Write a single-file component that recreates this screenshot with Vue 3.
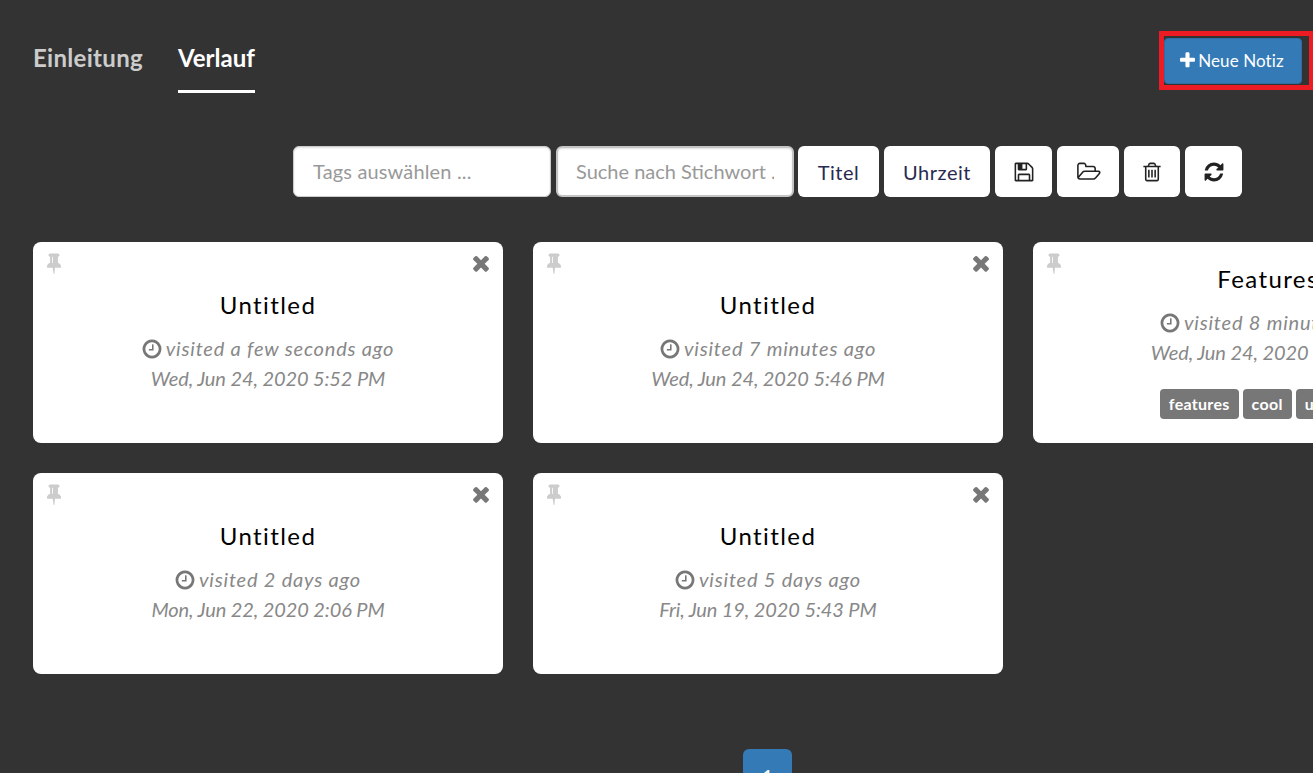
<script setup>
const P = {
  plus: 'M1600 736v192q0 40-28 68t-68 28h-416v416q0 40-28 68t-68 28h-192q-40 0-68-28t-28-68v-416h-416q-40 0-68-28t-28-68v-192q0-40 28-68t68-28h416v-416q0-40 28-68t68-28h192q40 0 68 28t28 68v416h416q40 0 68 28t28 68z',
  times: 'M1490 1322q0 40-28 68l-136 136q-28 28-68 28t-68-28l-294-294-294 294q-28 28-68 28t-68-28l-136-136q-28-28-28-68t28-68l294-294-294-294q-28-28-28-68t28-68l136-136q28-28 68-28t68 28l294 294 294-294q28-28 68-28t68 28l136 136q28 28 28 68t-28 68l-294 294 294 294q28 28 28 68z',
  clock: 'M1024 544v448q0 14-9 23t-23 9h-320q-14 0-23-9t-9-23v-64q0-14 9-23t23-9h224v-352q0-14 9-23t23-9h64q14 0 23 9t9 23zm416 352q0-148-73-273t-198-198-273-73-273 73-198 198-73 273 73 273 198 198 273 73 273-73 198-198 73-273zm224 0q0 209-103 385.500t-279.500 279.500-385.500 103-385.500-103-279.500-279.500-103-385.500 103-385.500 279.500-279.500 385.500-103 385.500 103 279.500 279.500 103 385.500z',
  pin: 'M800 864v-448q0-14-9-23t-23-9-23 9-9 23v448q0 14 9 23t23 9 23-9 9-23zm672 352q0 26-19 45t-45 19h-429l-51 483q-2 12-10.500 20.500t-20.500 8.500h-1q-27 0-32-27l-76-485h-404q-26 0-45-19t-19-45q0-123 78.500-221.500t177.500-98.500v-512q-52 0-90-38t-38-90 38-90 90-38h640q52 0 90 38t38 90-38 90-90 38v512q99 0 177.500 98.500t78.500 221.500z',
  save: 'M512 1536h768v-384h-768v384zm896 0h128v-896q0-14-10-38.500t-20-34.500l-281-281q-10-10-34-20t-39-10v416q0 40-28 68t-68 28h-576q-40 0-68-28t-28-68v-416h-128v1280h128v-416q0-40 28-68t68-28h832q40 0 68 28t28 68v416zm-384-928v-320q0-13-9.500-22.500t-22.500-9.500h-192q-13 0-22.500 9.500t-9.500 22.500v320q0 13 9.500 22.500t22.500 9.500h192q13 0 22.500-9.500t9.500-22.500zm640 32v928q0 40-28 68t-68 28h-1344q-40 0-68-28t-28-68v-1344q0-40 28-68t68-28h928q40 0 88 20t76 48l280 280q28 28 48 76t20 88z',
  open: 'M1845 931q0-35-53-35h-1088q-40 0-85.500 21.500t-71.500 52.500l-294 363q-18 24-18 40 0 35 53 35h1088q40 0 86-22t71-53l294-363q18-22 18-39zm-1141-163h768v-160q0-40-28-68t-68-28h-576q-40 0-68-28t-28-68v-64q0-40-28-68t-68-28h-320q-40 0-68 28t-28 68v853l256-315q44-53 116-87.500t140-34.500zm1269 163q0 62-46 120l-295 363q-43 53-116 87.500t-140 34.500h-1088q-92 0-158-66t-66-158v-960q0-92 66-158t158-66h320q92 0 158 66t66 158v32h544q92 0 158 66t66 158v160h192q54 0 99 24.500t67 70.500q15 32 15 68z',
  trash: 'M704 736v576q0 14-9 23t-23 9h-64q-14 0-23-9t-9-23v-576q0-14 9-23t23-9h64q14 0 23 9t9 23zm256 0v576q0 14-9 23t-23 9h-64q-14 0-23-9t-9-23v-576q0-14 9-23t23-9h64q14 0 23 9t9 23zm256 0v576q0 14-9 23t-23 9h-64q-14 0-23-9t-9-23v-576q0-14 9-23t23-9h64q14 0 23 9t9 23zm128 724v-948h-896v948q0 22 7 40.500t14.500 27 10.500 8.500h832q3 0 10.500-8.500t14.500-27 7-40.500zm-672-1076h448l-48-117q-7-9-17-11h-317q-10 2-17 11zm928 32v64q0 14-9 23t-23 9h-96v948q0 83-47 143.500t-113 60.500h-832q-66 0-113-58.500t-47-141.500v-952h-96q-14 0-23-9t-9-23v-64q0-14 9-23t23-9h309l70-167q15-37 54-63t79-26h320q40 0 79 26t54 63l70 167h309q14 0 23 9t9 23z',
  refresh: 'M1639 1056q0 5-1 7-64 268-268 434.500t-478 166.500q-146 0-282.500-55t-243.500-157l-129 129q-19 19-45 19t-45-19-19-45v-448q0-26 19-45t45-19h448q26 0 45 19t19 45-19 45l-137 137q71 66 161 102t187 36q134 0 250-65t186-179q11-17 53-117 8-23 30-23h192q13 0 22.500 9.500t9.500 22.500zm25-800v448q0 26-19 45t-45 19h-448q-26 0-45-19t-19-45 19-45l138-138q-148-137-349-137-134 0-250 65t-186 179q-11 17-53 117-8 23-30 23h-199q-13 0-22.500-9.500t-9.500-22.500v-7q65-268 270-434.500t480-166.500q146 0 284 55.500t245 156.500l130-129q19-19 45-19t45 19 19 45z'
}
const tools = [
  { k: 'save', w: 57, vb: '0 0 1792 1792' },
  { k: 'open', w: 62, vb: '0 0 1984 1792', wide: true },
  { k: 'trash', w: 56, vb: '0 0 1792 1792' },
  { k: 'refresh', w: 57, vb: '0 0 1792 1792' }
]
const notes = [
  { title: 'Untitled', ago: 'visited a few seconds ago', date: 'Wed, Jun 24, 2020 5:52 PM' },
  { title: 'Untitled', ago: 'visited 7 minutes ago', date: 'Wed, Jun 24, 2020 5:46 PM' },
  { title: 'Features', ago: 'visited 8 minutes ago', date: 'Wed, Jun 24, 2020 5:45 PM', tags: ['features', 'cool', 'usability'] },
  { title: 'Untitled', ago: 'visited 2 days ago', date: 'Mon, Jun 22, 2020 2:06 PM' },
  { title: 'Untitled', ago: 'visited 5 days ago', date: 'Fri, Jun 19, 2020 5:43 PM' }
]
</script>

<template>
  <div class="page">
    <header class="top">
      <nav class="tabs">
        <a class="tab">Einleitung</a>
        <a class="tab active">Verlauf</a>
      </nav>
      <div class="mark">
        <button class="new">
          <svg class="plus" viewBox="0 0 1792 1792"><path :d="P.plus" /></svg>
          <span>Neue Notiz</span>
        </button>
      </div>
    </header>

    <section class="toolbar">
      <input class="field f1" placeholder="Tags auswählen ..." />
      <input class="field f2" placeholder="Suche nach Stichwort ..." />
      <button class="tool t1">Titel</button>
      <button class="tool t2">Uhrzeit</button>
      <button v-for="t in tools" :key="t.k" class="tool" :style="{ width: t.w + 'px' }">
        <svg :class="t.wide ? 'ti wide' : 'ti'" :viewBox="t.vb"><path :d="P[t.k]" /></svg>
      </button>
    </section>

    <section class="grid">
      <article v-for="(n, i) in notes" :key="i" class="card">
        <svg class="pin" viewBox="0 0 1792 1792"><path :d="P.pin" /></svg>
        <svg class="close" viewBox="0 0 1792 1792"><path :d="P.times" /></svg>
        <h3>{{ n.title }}</h3>
        <p class="ago">
          <svg class="clock" viewBox="0 0 1792 1792"><path :d="P.clock" /></svg>
          <span>{{ n.ago }}</span>
        </p>
        <p class="date">{{ n.date }}</p>
        <div v-if="n.tags" class="tags">
          <span v-for="t in n.tags" :key="t" class="tag">{{ t }}</span>
        </div>
      </article>
    </section>

    <footer class="pager">
      <a class="pg">1</a>
    </footer>
  </div>
</template>

<style>
html, body { margin: 0; background: #333; overflow: hidden; }
</style>

<style scoped>
.page {
  width: 1313px;
  height: 773px;
  overflow: hidden;
  background: #333;
  font-family: Lato, "Noto Sans", sans-serif;
}
.top {
  display: flex;
  justify-content: space-between;
  align-items: flex-start;
  padding: 31px 0 0 33px;
  height: 146px;
  box-sizing: border-box;
}
.tabs { display: flex; gap: 35px; }
.tab {
  display: block;
  height: 62px;
  box-sizing: border-box;
  border-bottom: 3px solid transparent;
  color: #ccc;
  font-size: 24px;
  font-weight: 700;
  line-height: 54px;
}
.tab:first-child { letter-spacing: 0.3px; }
.tab.active { color: #fff; border-bottom-color: #fff; }
.mark {
  width: 154px;
  height: 59px;
  box-sizing: border-box;
  border: 5px solid #ed1c24;
  border-right-width: 4px;
  padding-top: 2px;
}
.new {
  display: flex;
  align-items: center;
  justify-content: center;
  gap: 1px;
  width: 138px;
  height: 46px;
  padding: 0 4px 2px 0;
  border: 1px solid #2e6da4;
  border-radius: 4px;
  background: #337ab7;
  color: #fff;
  font: inherit;
  font-size: 17px;
  letter-spacing: 0.1px;
}
.plus { width: 19px; height: 19px; fill: #fff; }
.toolbar {
  display: flex;
  justify-content: flex-end;
  gap: 5px;
  height: 51px;
  padding-right: 71px;
}
.field {
  box-sizing: border-box;
  height: 51px;
  padding: 0 18px 2px 19px;
  background: #fff;
  border: 1px solid #ccc;
  border-radius: 6px;
  box-shadow: inset 0 1px 2px rgba(0, 0, 0, 0.12);
  font: inherit;
  font-size: 20px;
  letter-spacing: 0.15px;
  outline: none;
}
.field::placeholder { color: #999; opacity: 1; }
.f1 { width: 258px; }
.f2 { width: 238px; border: 2px solid #c4c4c4; margin-right: -1px; padding-left: 18px; letter-spacing: 0; }
.tool {
  display: flex;
  align-items: center;
  justify-content: center;
  box-sizing: border-box;
  height: 51px;
  padding: 0;
  border: 0;
  border-radius: 6px;
  background: #fff;
  color: #2a2a50;
  font: inherit;
  font-size: 20px;
  letter-spacing: 0.5px;
}
.t1 { width: 81px; }
.t2 { width: 106px; }
.ti { width: 22px; height: 22px; fill: #222; }
.ti.wide { width: 25px; height: 22px; }
.grid {
  display: grid;
  grid-template-columns: repeat(3, 470px);
  grid-auto-rows: 201px;
  gap: 30px;
  margin-top: 45px;
  padding-left: 33px;
}
.card {
  position: relative;
  display: flex;
  flex-direction: column;
  align-items: center;
  justify-content: center;
  overflow: hidden;
  background: #fff;
  border-radius: 8px;
  padding-bottom: 4px;
  box-sizing: border-box;
}
h3 {
  margin: 1px 0 13px;
  color: #000;
  font-size: 24px;
  font-weight: 400;
  line-height: 30px;
  letter-spacing: 1.4px;
}
.ago, .date {
  margin: 0;
  color: #888;
  font-size: 20px;
  font-style: italic;
  line-height: 30px;
  white-space: nowrap;
}
.ago { display: flex; align-items: center; gap: 3px; }
.ago span { letter-spacing: 0.8px; }
.date { letter-spacing: -0.1px; }
.clock { width: 22px; height: 22px; margin: 2px 0 0 -1px; fill: #777; }
.pin { position: absolute; left: 10px; top: 9px; width: 22px; height: 24px; fill: #ccc; }
.close { position: absolute; right: 10px; top: 9px; width: 24px; height: 24px; fill: #777; }
.tags { display: flex; gap: 4px; margin-top: 22px; }
.tag {
  padding: 0 9px;
  background: #777;
  border-radius: 4px;
  color: #fff;
  font-size: 16px;
  font-weight: 700;
  line-height: 30px;
  letter-spacing: 0.3px;
}
.pager { padding: 75px 0 0 743px; }
.pg {
  display: block;
  width: 49px;
  height: 48px;
  background: #337ab7;
  border-radius: 6px 6px 0 0;
  color: #fff;
  font-size: 20px;
  line-height: 54px;
  text-align: center;
}
</style>
